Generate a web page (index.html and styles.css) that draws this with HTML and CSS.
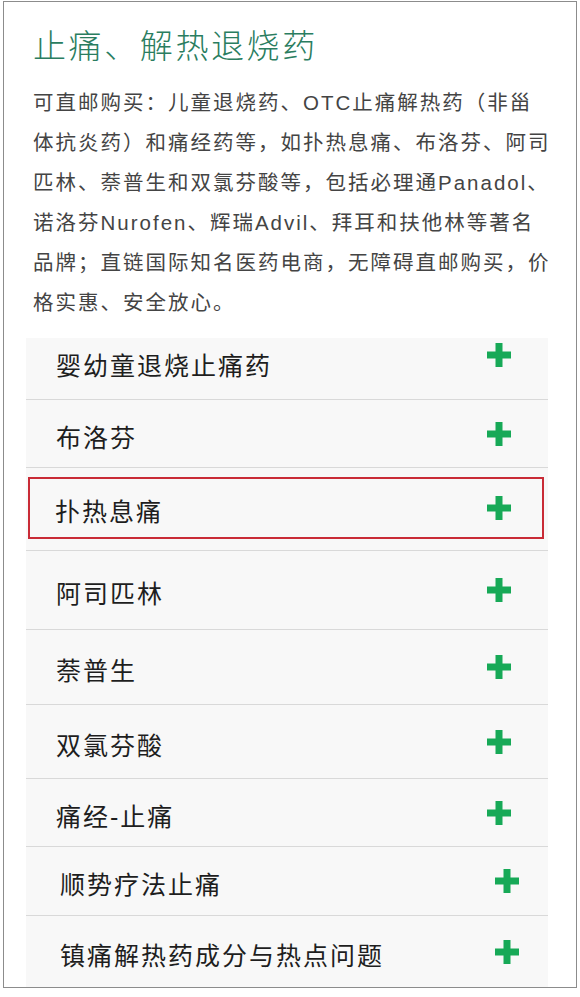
FILE: index.html
```html
<!DOCTYPE html>
<html lang="zh-CN">
<head>
    <meta charset="UTF-8">
    <meta name="viewport" content="width=device-width, initial-scale=1.0">
    <title>止痛、解热退烧药</title>
    <link rel="stylesheet" href="styles.css">
</head>
<body>
    <div class="panel">
        <h1 class="title">止痛、解热退烧药</h1>
        <p class="intro">可直邮购买：儿童退烧药、OTC止痛解热药（非甾体抗炎药）和痛经药等，如扑热息痛、布洛芬、阿司匹林、萘普生和双氯芬酸等，包括必理通Panadol、诺洛芬Nurofen、辉瑞Advil、拜耳和扶他林等著名品牌；直链国际知名医药电商，无障碍直邮购买，价格实惠、安全放心。</p>

        <ul class="list">
            <li class="item item-top">
                <div class="item-box">
                    <span class="item-label">婴幼童退烧止痛药</span>
                    <svg class="plus" width="24" height="24" viewBox="0 0 24 24"><path d="M8.5 0h7v8.5H24v7h-8.5V24h-7v-8.5H0v-7h8.5z"/></svg>
                </div>
            </li>
            <li class="item">
                <div class="item-box">
                    <span class="item-label">布洛芬</span>
                    <svg class="plus" width="24" height="24" viewBox="0 0 24 24"><path d="M8.5 0h7v8.5H24v7h-8.5V24h-7v-8.5H0v-7h8.5z"/></svg>
                </div>
            </li>
            <li class="item active">
                <div class="item-box">
                    <span class="item-label">扑热息痛</span>
                    <svg class="plus" width="24" height="24" viewBox="0 0 24 24"><path d="M8.5 0h7v8.5H24v7h-8.5V24h-7v-8.5H0v-7h8.5z"/></svg>
                </div>
            </li>
            <li class="item">
                <div class="item-box">
                    <span class="item-label">阿司匹林</span>
                    <svg class="plus" width="24" height="24" viewBox="0 0 24 24"><path d="M8.5 0h7v8.5H24v7h-8.5V24h-7v-8.5H0v-7h8.5z"/></svg>
                </div>
            </li>
            <li class="item">
                <div class="item-box">
                    <span class="item-label">萘普生</span>
                    <svg class="plus" width="24" height="24" viewBox="0 0 24 24"><path d="M8.5 0h7v8.5H24v7h-8.5V24h-7v-8.5H0v-7h8.5z"/></svg>
                </div>
            </li>
            <li class="item">
                <div class="item-box">
                    <span class="item-label">双氯芬酸</span>
                    <svg class="plus" width="24" height="24" viewBox="0 0 24 24"><path d="M8.5 0h7v8.5H24v7h-8.5V24h-7v-8.5H0v-7h8.5z"/></svg>
                </div>
            </li>
            <li class="item">
                <div class="item-box">
                    <span class="item-label">痛经-止痛</span>
                    <svg class="plus" width="24" height="24" viewBox="0 0 24 24"><path d="M8.5 0h7v8.5H24v7h-8.5V24h-7v-8.5H0v-7h8.5z"/></svg>
                </div>
            </li>
            <li class="item item-shift">
                <div class="item-box">
                    <span class="item-label">顺势疗法止痛</span>
                    <svg class="plus" width="24" height="24" viewBox="0 0 24 24"><path d="M8.5 0h7v8.5H24v7h-8.5V24h-7v-8.5H0v-7h8.5z"/></svg>
                </div>
            </li>
            <li class="item item-shift">
                <div class="item-box">
                    <span class="item-label">镇痛解热药成分与热点问题</span>
                    <svg class="plus" width="24" height="24" viewBox="0 0 24 24"><path d="M8.5 0h7v8.5H24v7h-8.5V24h-7v-8.5H0v-7h8.5z"/></svg>
                </div>
            </li>
        </ul>
    </div>
</body>
</html>
```

FILE: styles.css
```css
body { margin: 0; padding: 1px 3px 0; background: #fff; font-family: "Liberation Sans", "Noto Sans CJK SC", sans-serif; }
.panel { box-sizing: border-box; width: 574px; border: 1px solid #8c8c8c; background: #fff; }

.title { margin: 25px 0 0 29px; font-size: 33px; line-height: 40px; font-weight: 300; letter-spacing: 2.6px; color: #2a7d60; }
.intro { margin: 16px 0 0 29px; width: 521px; font-size: 20.5px; letter-spacing: 2px; line-height: 40px; color: #444; }

.list { list-style: none; margin: 15px 28px 0 22px; padding: 0; }
.item { display: flex; background: #f8f8f8; border-bottom: 1px solid #d9d9d9; }
.item:last-child { border-bottom: none; }
.item-box { flex: 1; display: flex; align-items: center; justify-content: space-between; padding: 0 37px 0 30px; }
.item-label { padding-top: 8px; line-height: 30px; font-size: 25px; letter-spacing: 2px; color: #1e1e1e; }
.plus { fill: #17a957; flex: none; }

.item-top .item-box { align-items: flex-start; }
.item-top .item-label { padding-top: 13px; }
.item-top .plus { margin-top: 5px; }

.item-shift .item-box { padding: 0 29px 0 34px; }

.item.active .item-box { margin: 9px 4px 11px 2px; padding: 0 31px 0 25px; border: 2px solid #c92b36; }

/* row heights follow the original capture */
.item:nth-child(1) { height: 61px; }
.item:nth-child(2) { height: 67px; }
.item:nth-child(3) { height: 82px; }
.item:nth-child(4) { height: 78px; }
.item:nth-child(5) { height: 74px; }
.item:nth-child(6) { height: 73px; }
.item:nth-child(7) { height: 67px; }
.item:nth-child(8) { height: 68px; }
.item:nth-child(9) { height: 71px; }
```
